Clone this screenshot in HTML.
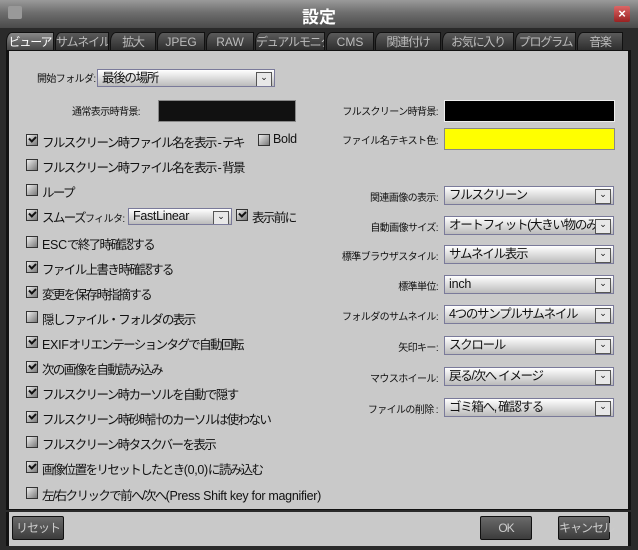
<!DOCTYPE html>
<html><head><meta charset="utf-8"><style>
*{margin:0;padding:0;box-sizing:border-box}
html,body{overflow:hidden}
body{width:638px;height:550px;background:#2a2a2a;font-family:"Liberation Sans","Noto Sans CJK JP",sans-serif;color:#111;position:relative}
.a{position:absolute;white-space:nowrap}
.L{letter-spacing:-0.3px}
#title{left:0;top:0;width:638px;height:28px;background:linear-gradient(#9a9a9a,#6e6e6e 45%,#4a4a4a);}
#title .t{left:0;width:638px;top:3px;text-align:center;color:#fff;font-size:17px;font-weight:bold}
.tab{position:absolute;top:32px;height:19px;background:linear-gradient(#5a5a5a,#2e2e2e);color:#bbb;font-size:12px;letter-spacing:-1.2px;line-height:18px;text-align:center;border-top-left-radius:6px 10px;border:1px solid #111;white-space:nowrap;overflow:hidden}
.tab.on{background:linear-gradient(#888,#444);color:#fff}
#panel{left:6px;top:50px;width:625px;height:460px;background:#c9c9c9;border:1px solid #111;border-left:3px solid #111;border-right:3px solid #111}
#bottom{left:6px;top:512px;width:625px;height:34px;background:#c9c9c9;border-left:3px solid #111;border-right:3px solid #111}
.cb{position:absolute;width:12px;height:12px;background:linear-gradient(135deg,#eee,#777);border:1px solid #333}
.cb.c::after{content:"";position:absolute;left:2px;top:1px;width:5px;height:3px;border-left:2px solid #111;border-bottom:2px solid #111;transform:rotate(-45deg)}
.lb{font-size:12.5px;letter-spacing:-1.6px}
.sm{font-size:10px;letter-spacing:-0.6px}
.dd{position:absolute;height:19px;border:1px solid #7a7a9a;background:linear-gradient(#fff,#ddd 50%,#bbb);font-size:12.5px;letter-spacing:-1.3px;line-height:17px;padding-left:4px;white-space:nowrap;overflow:hidden}
.dd::after{content:"⌄";position:absolute;right:2px;top:2px;width:14px;height:13px;border:1px solid #555;background:#e8e8e8;font-size:9px;line-height:8px;text-align:center;letter-spacing:0}
.btn{position:absolute;top:516px;height:24px;background:linear-gradient(#6a6a6a,#3c3c3c);border:1px solid #111;color:#ccc;font-size:12px;letter-spacing:-1px;line-height:22px;text-align:center;border-radius:2px;white-space:nowrap}
</style></head><body>
<div id="title" class="a"><div class="a" style="left:8px;top:6px;width:14px;height:13px;background:#999;border-radius:2px"></div><div class="a t">設定</div><div class="a" style="left:614px;top:6px;width:16px;height:16px;background:linear-gradient(#d66,#922);border-radius:2px;color:#fff;font-size:13px;text-align:center;line-height:16px;font-weight:bold">×</div></div>
<div class="tab on" style="left:6px;width:48px">ビューア</div>
<div class="tab" style="left:55px;width:54px">サムネイル</div>
<div class="tab" style="left:110px;width:46px">拡大</div>
<div class="tab" style="left:157px;width:48px;letter-spacing:0">JPEG</div>
<div class="tab" style="left:206px;width:48px;letter-spacing:0">RAW</div>
<div class="tab" style="left:255px;width:70px">デュアルモニタ</div>
<div class="tab" style="left:326px;width:48px;letter-spacing:0">CMS</div>
<div class="tab" style="left:375px;width:66px">関連付け</div>
<div class="tab" style="left:442px;width:72px">お気に入り</div>
<div class="tab" style="left:515px;width:61px">プログラム</div>
<div class="tab" style="left:577px;width:46px">音楽</div>
<div id="panel" class="a"></div>
<div id="bottom" class="a"></div>
<div class="a sm" style="left:37px;top:70px">開始フォルダ:</div>
<div class="dd" style="left:97px;top:69px;width:178px;height:18px">最後の場所</div>
<div class="a sm" style="left:72px;top:103px">通常表示時背景:</div>
<div class="a" style="left:158px;top:100px;width:138px;height:22px;background:#111;border:1px solid #888"></div>
<div class="a sm" style="right:200px;top:103px">フルスクリーン時背景:</div>
<div class="a" style="left:444px;top:100px;width:171px;height:22px;background:#000;border:1px solid #eee"></div>
<div class="a sm" style="right:200px;top:132px">ファイル名テキスト色:</div>
<div class="a" style="left:444px;top:128px;width:171px;height:22px;background:#ffff00;border:1px solid #888"></div>
<div class="cb" style="left:258px;top:134px"></div><div class="a lb" style="left:273px;top:132px;letter-spacing:-0.3px">Bold</div>

<div class="cb c" style="left:26px;top:134px"></div><div class="a lb" style="left:42px;top:132px">フルスクリーン時ファイル名を表示 - テキ</div>
<div class="cb" style="left:26px;top:159px"></div><div class="a lb" style="left:42px;top:157px">フルスクリーン時ファイル名を表示 - 背景</div>
<div class="cb" style="left:26px;top:184px"></div><div class="a lb" style="left:42px;top:182px">ループ</div>
<div class="cb c" style="left:26px;top:209px"></div><div class="a lb" style="left:42px;top:207px">スムーズ<span class="sm">フィルタ:</span></div>
<div class="dd" style="left:128px;top:208px;width:104px;height:17px;line-height:15px;letter-spacing:-0.3px">FastLinear</div>
<div class="cb c" style="left:236px;top:209px"></div><div class="a lb" style="left:252px;top:207px">表示前に</div>
<div class="cb" style="left:26px;top:236px"></div><div class="a lb" style="left:42px;top:234px"><span class="L">ESC</span>で終了時確認する</div>
<div class="cb c" style="left:26px;top:261px"></div><div class="a lb" style="left:42px;top:259px">ファイル上書き時確認する</div>
<div class="cb c" style="left:26px;top:286px"></div><div class="a lb" style="left:42px;top:284px">変更を保存時指摘する</div>
<div class="cb" style="left:26px;top:311px"></div><div class="a lb" style="left:42px;top:309px">隠しファイル・フォルダの表示</div>
<div class="cb c" style="left:26px;top:336px"></div><div class="a lb" style="left:42px;top:334px"><span class="L">EXIF</span>オリエンテーションタグで自動回転</div>
<div class="cb c" style="left:26px;top:361px"></div><div class="a lb" style="left:42px;top:359px">次の画像を自動読み込み</div>
<div class="cb c" style="left:26px;top:386px"></div><div class="a lb" style="left:42px;top:384px">フルスクリーン時カーソルを自動で隠す</div>
<div class="cb c" style="left:26px;top:411px"></div><div class="a lb" style="left:42px;top:409px">フルスクリーン時砂時計のカーソルは使わない</div>
<div class="cb" style="left:26px;top:436px"></div><div class="a lb" style="left:42px;top:434px">フルスクリーン時タスクバーを表示</div>
<div class="cb c" style="left:26px;top:461px"></div><div class="a lb" style="left:42px;top:459px">画像位置をリセットしたとき<span class="L">(0,0)</span>に読み込む</div>
<div class="cb" style="left:26px;top:487px"></div><div class="a lb" style="left:42px;top:485px">左/右クリックで前へ/次へ<span class="L">(Press Shift key for magnifier)</span></div>

<div class="a sm" style="right:200px;top:189px">関連画像の表示:</div><div class="dd" style="left:444px;top:186px;width:170px">フルスクリーン</div>
<div class="a sm" style="right:200px;top:219px">自動画像サイズ:</div><div class="dd" style="left:444px;top:216px;width:170px">オートフィット(大きい物のみ)</div>
<div class="a sm" style="right:200px;top:248px">標準ブラウザスタイル:</div><div class="dd" style="left:444px;top:245px;width:170px">サムネイル表示</div>
<div class="a sm" style="right:200px;top:278px">標準単位:</div><div class="dd" style="left:444px;top:275px;width:170px;letter-spacing:-0.2px">inch</div>
<div class="a sm" style="right:200px;top:308px">フォルダのサムネイル:</div><div class="dd" style="left:444px;top:305px;width:170px">4つのサンプルサムネイル</div>
<div class="a sm" style="right:200px;top:339px">矢印キー:</div><div class="dd" style="left:444px;top:336px;width:170px">スクロール</div>
<div class="a sm" style="right:200px;top:370px">マウスホイール:</div><div class="dd" style="left:444px;top:367px;width:170px">戻る/次へ イメージ</div>
<div class="a sm" style="right:200px;top:401px">ファイルの削除 :</div><div class="dd" style="left:444px;top:398px;width:170px">ゴミ箱へ, 確認する</div>

<div class="btn" style="left:12px;width:52px">リセット</div>
<div class="btn" style="left:480px;width:52px">OK</div>
<div class="btn" style="left:558px;width:52px">キャンセル</div>
</body></html>
